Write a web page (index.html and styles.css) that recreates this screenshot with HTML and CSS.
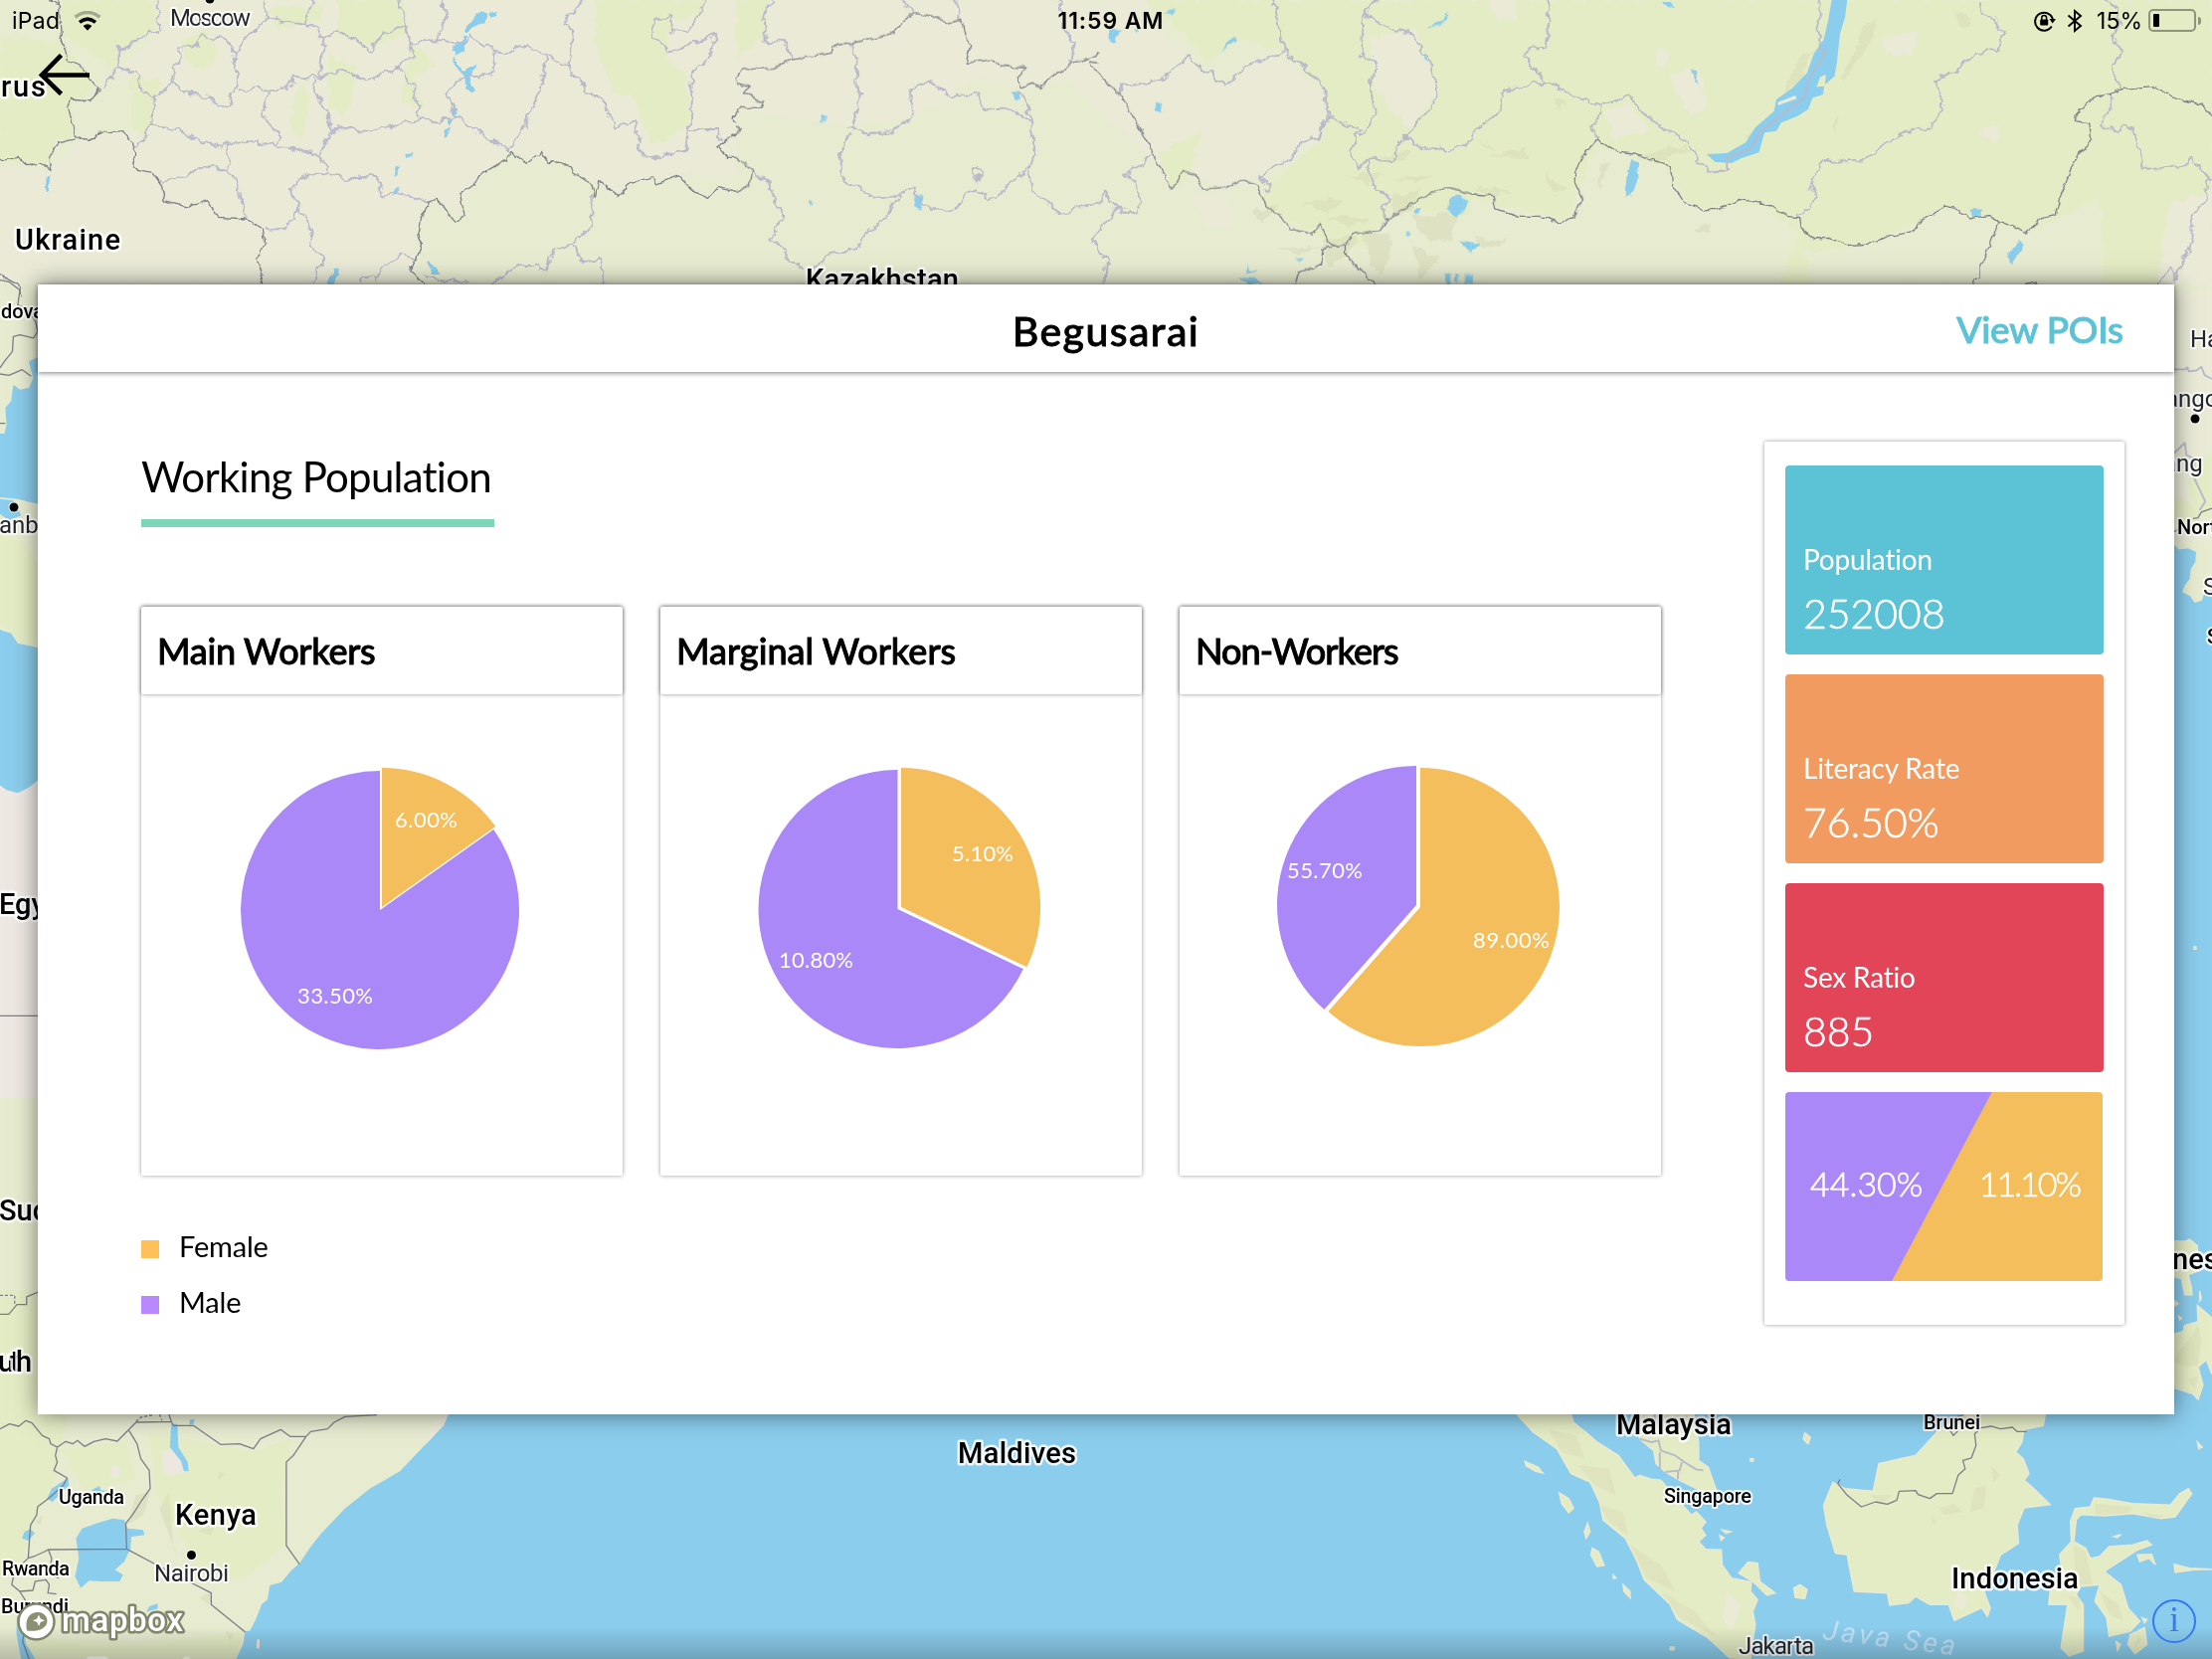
FILE: index.html
```html
<!DOCTYPE html>
<html lang="en">
<head>
<meta charset="utf-8">
<title>Begusarai</title>
<link rel="stylesheet" href="styles.css">
</head>
<body>
<div class="screen">
  <svg class="map" viewBox="0 0 2224 1668" aria-hidden="true">
    <defs>
      <filter id="rough" x="0" y="0" width="2224" height="1668" filterUnits="userSpaceOnUse">
        <feTurbulence type="fractalNoise" baseFrequency=".09" numOctaves="3" seed="4"/>
        <feDisplacementMap in="SourceGraphic" scale="11" xChannelSelector="R" yChannelSelector="G"/>
      </filter>
      <filter id="coast" x="0" y="0" width="2224" height="1668" filterUnits="userSpaceOnUse">
        <feTurbulence type="fractalNoise" baseFrequency=".12" numOctaves="2" seed="9"/>
        <feDisplacementMap in="SourceGraphic" scale="6" xChannelSelector="R" yChannelSelector="G"/>
      </filter>
      <linearGradient id="foot" x1="0" y1="0" x2="0" y2="1">
        <stop offset="0" stop-color="#000" stop-opacity="0"/>
        <stop offset="1" stop-color="#000" stop-opacity=".2"/>
      </linearGradient>
    </defs>
    <rect class="land" width="2224" height="1668"/>

    <!-- vegetation and steppe -->
    <g filter="url(#rough)">
      <g transform="scale(.4719 .3333)">
        <path class="beige" d="M330 0H1568V530L1440 530L1350 550L1310 590L1260 550L1210 490L1080 460L1010 550L980 640L920 600L890 700L880 860H0V500L110 515L170 420L270 395L330 300L240 220L340 90Z"/>
        <path class="green" d="M0 0H330V90L250 150L240 210L200 160L130 110V0ZM0 110L130 130L210 260L150 310L160 410L110 430L100 500L0 480ZM720 0H860L870 90L800 140L720 110ZM1270 0H1500L1510 110L1460 220L1470 380L1390 440L1350 300L1310 280L1270 150ZM560 20H690V60L600 90ZM880 130L930 200L880 230L900 330L850 310ZM640 240L660 300L640 420L620 380Z"/>
        <path class="beige" d="M1430 60L1500 40L1530 150L1480 230L1420 180Z"/>
        <path class="green" d="M390 120L440 90L470 160L430 220L390 170ZM700 160L760 200L740 350L700 320ZM280 230L340 240L310 420L280 380Z"/>
      </g>
      <g transform="translate(740 0) scale(.4719 .3333)">
        <path class="beige" d="M0 0H900L870 60L960 160L1040 260L1100 200L1160 170L1250 270L1260 400L1180 480L1110 540L1040 570L960 520L920 570L880 470L700 240L620 270L520 230L380 350L250 380L0 330ZM1380 80L1450 90L1490 280L1440 380L1390 330L1360 150ZM970 590L1050 580L1060 690L1000 680Z"/>
        <path class="green" d="M870 0H1568V650L1400 620L1340 740L1280 740L1120 620L1130 560L1250 420L1260 360L1250 260L1170 160L1080 110L1000 190L950 90ZM0 0H70L60 120L0 180ZM900 460L990 400L960 540L920 560Z"/>
        <path class="beige" d="M1350 110L1450 90L1490 280L1440 390L1390 330L1360 250ZM1110 190L1190 200L1230 280L1200 380L1110 390Z"/>
      </g>
      <g transform="translate(1480 0) scale(.4745 .3333)">
        <path class="green" d="M0 0H1568V860H640V700L480 640L400 500L270 440L200 660L0 600Z"/>
        <path class="mid" d="M0 600L200 670L240 520L260 440L410 500L450 620L620 620L690 700L650 860H0ZM700 760L850 730L1010 625L1180 700L1330 600L1340 860H720Z"/>
        <path class="beige" d="M390 150L420 160L410 200L390 190ZM420 230L480 200L500 330L460 350ZM280 340L330 310L380 390L300 420ZM870 120L950 90L930 170L880 160ZM1070 400L1120 370L1110 430ZM30 0H100L90 60L50 50Z"/>
        <path class="beige" d="M1480 610L1568 580V860H1450Z"/>
      </g>
    </g>

    <!-- hill shading -->
    <g class="relief" filter="url(#rough)">
      <g transform="translate(740 0) scale(.4719 .3333)">
        <path d="M1370 470L1440 460L1420 490ZM1310 530L1380 520L1340 560ZM1400 590L1460 570L1440 640L1400 650ZM1100 640L1160 620L1120 670ZM1200 610L1300 600L1260 640ZM1260 650L1350 660L1300 680ZM1440 650L1540 640L1520 730L1470 720ZM1150 745H1240L1200 765ZM1250 720L1330 715L1300 770L1260 800ZM1340 690L1400 720L1380 830L1350 800ZM1440 740L1500 780L1460 840ZM1400 540L1480 530L1450 555Z"/>
      </g>
      <g transform="translate(1480 0) scale(.4745 .3333)">
        <path d="M370 465L430 440L460 455L400 475ZM830 80L855 60L840 140L785 250L780 230L810 160ZM0 560L90 580L40 590ZM0 720L80 730L30 750ZM270 500L290 490L270 580ZM150 520L200 570L170 580ZM580 410L620 400L600 440ZM360 470L400 455L420 490ZM0 420L30 430L60 460ZM40 470L110 450L120 480ZM690 180L720 150L700 240L660 280ZM760 380L780 350L770 400ZM1020 30L1060 60L1040 90ZM470 690L510 680L500 710ZM170 290L200 310L180 330Z"/>
      </g>
    </g>

    <!-- lower left and side strips of land -->
    <rect class="mid" x="0" y="286" width="45" height="250"/>
    <g transform="translate(0 270) scale(.4464 .3333)">
      <path class="sea" d="M90 265L65 280L75 330L65 360L45 365L30 350L25 400L12 420L15 470L10 498L0 498V690L40 695L90 712ZM0 695L30 700L48 745L20 760L0 740ZM0 1090L25 1100L40 1130L90 1145V1350H0Z"/>
      <path class="green" d="M0 800L60 830L85 900V1130L40 1125L20 1090L0 1070Z"/>
      <path class="border" d="M0 35L20 40L45 65L40 110L60 120L80 160L85 190L75 210L45 200L30 205L28 250L10 280L0 300M0 318L20 322L50 305L70 325M0 467H12"/>
    </g>
    <g transform="translate(0 700) scale(.4464 .4592)">
      <rect class="desert" width="90" height="880"/>
      <rect class="mid" y="880" width="90" height="420"/>
      <path class="sea" d="M0 0H90V180L65 200L40 212L15 205L0 195Z"/>
      <path class="green" d="M0 1300H90V1568H0Z"/>
      <path class="border" d="M0 700H90M0 1353H20L38 1332H60V1315L90 1303"/>
      <path class="border dashed" d="M0 1312H33V1332"/>
    </g>
    <g transform="translate(0 1400) scale(.4719 .3333)">
      <path class="green" d="M0 0H150L120 250L70 400L50 500L0 560Z M320 120L540 180L620 140L600 300L610 460L520 560L430 540L330 300ZM130 170L270 150L290 260L180 300ZM60 740L300 760L520 720L500 804H60Z"/>
      <path class="pink" d="M345 180L380 165L400 240L350 250ZM240 220L260 230L250 260L235 250Z"/>
      <path class="relief" d="M290 310L320 300L305 370L270 400ZM420 420L460 390L450 430ZM340 350L360 300L370 470L380 500ZM425 620L450 600L445 640ZM480 720L500 730L490 750ZM75 390L92 370L85 400ZM465 240L480 245L465 265Z"/>
      <path class="sea" d="M956 60L945 100L852 238L788 290L735 350L684 426L662 465L638 516L622 535L600 572L575 582L570 625L558 638L545 685L532 720H522L518 760L503 804H4800V60Z"/>
      <path class="beach" d="M956 66L945 100L905 160L925 105L935 66ZM548 745H553V772H546Z"/>
      <path class="sea" d="M365 95H378L380 165L400 210L402 238H392L386 208L362 165ZM405 82L415 80L412 97H403ZM145 258L147 280L112 330L100 320L110 290ZM65 412L74 425L60 447L47 440L52 420ZM175 410L205 395L240 380L265 385L272 410L305 415L308 430L280 435L278 470L265 510L245 535L262 550L255 570L215 570L190 568L172 590L160 555L168 500L162 440ZM195 295L212 282L215 295L235 298L200 303ZM336 637V652L312 662L318 645ZM36 670L48 700L56 760L75 804H45L35 730Z"/>
      <path class="border" d="M0 110L20 95L40 102L55 85L68 92L90 130L105 140L108 155L122 165L140 148L155 155L165 145L180 163L200 148L225 140L250 147L290 90L365 88L370 100H412L470 157L510 155L540 170L555 140L598 112L618 133H652L662 118L698 110L712 90L735 73L803 68M652 133L625 190L610 210V462L638 518M365 88L360 66M122 165L118 190L122 210L115 235L143 258L135 280L105 318L80 345L78 370L65 400L60 500L72 495L95 480L103 474L270 472L268 395L282 370L300 330L320 290L318 235L300 200L292 155L275 115M270 472L340 525L450 605V640L522 722M60 500L45 520L28 560L25 580L42 600L70 597L75 570L98 565L105 580L102 605L120 608M42 600L60 640L55 700L48 750L62 804M103 474L110 500L105 545L125 560M60 710L85 690L98 660"/>
      <path class="border dashed" d="M290 88L300 75L325 68M340 66L345 85"/>
    </g>

    <!-- south-east asia -->
    <g transform="translate(1480 1400) scale(.4745 .3333)">
      <path class="green beachline" d="M95 66L130 120L180 170L210 245L250 270L270 330L278 385L325 440L350 510L365 565L420 640L435 685L500 740L545 800L590 804L600 700L595 660L605 625L590 600L592 572L550 560L530 520L528 475L495 473L480 450L495 430L485 410L495 390L475 360L465 370L440 330L400 265L380 262L355 250L345 258L310 190L265 150L245 125L215 90L210 66Z"/>
      <path class="green beachline" d="M345 66L355 140L385 175L390 215L410 240L440 265L490 300L518 295L500 225L480 205V150L470 66Z"/>
      <path class="green beachline" d="M1215 66L1210 100L1170 112L1165 150L1152 180L1168 200L1180 245L1170 265L1190 290L1225 338L1170 348L1155 400L1158 455L1120 490L1095 580L1085 600L1098 650L1092 675L1080 650L1022 688L1010 640L970 640L940 615L925 635L885 642L880 605L810 600L800 530L795 490L770 485L752 400L745 340L765 272L790 290L850 298L862 215L940 190L985 120L1040 66Z"/>
      <path class="green beachline" d="M1270 450L1268 390L1278 350L1310 345L1318 318L1345 322L1400 335L1480 340L1500 305L1518 290L1525 305L1490 375L1460 380L1400 365L1340 372L1290 368L1280 385L1275 450L1300 470L1310 500L1330 495L1350 465L1400 460L1430 447L1440 460L1410 475L1350 530L1340 540L1375 580L1390 650L1415 690L1395 720L1350 735L1345 680L1320 630L1330 580L1290 585L1280 610L1295 640V780L1265 795L1248 770L1262 640L1222 640L1225 600L1250 540L1245 490Z"/>
      <path class="green beachline" d="M565 545L585 512L605 515L610 570L642 605L625 612L595 570ZM682 590L695 580L710 595L705 622L685 618ZM255 470L268 480L280 522L265 525L252 490ZM185 303L205 320L215 350L205 363L190 335ZM112 208L140 225L150 243L135 238L115 222ZM705 122L717 135L712 155L702 140ZM245 395L250 420L242 440L238 420ZM320 580L335 600V620L322 600ZM298 548L305 560L300 562ZM530 415L548 420L538 425ZM525 432L534 438L528 446ZM1395 730L1425 710L1430 760L1405 788L1390 760ZM1365 752L1374 760L1368 778ZM1488 518L1520 530L1568 533L1530 535L1490 543ZM1360 435L1375 428L1368 438ZM1410 490L1440 488L1448 520L1435 500L1415 510ZM1535 0H1545L1540 22L1528 12ZM1537 150L1547 165L1540 170ZM1420 680L1430 685L1425 695ZM590 200H596V207H590ZM420 768H428V776H420Z"/>
      <path class="relief faint" d="M160 110L220 130L240 200L190 180ZM225 220L290 230L305 310L260 280ZM270 340L320 360L330 430L290 390ZM335 460L400 520L430 600L370 560ZM400 600L470 660L520 740L440 680ZM990 350L1020 335L1040 360L1000 370ZM1065 290L1090 280L1085 350L1055 360ZM1100 220L1120 250L1105 270ZM1320 335L1400 345L1390 365L1320 370ZM1420 360L1470 375L1440 380ZM1275 460L1300 480L1315 580L1280 580ZM1260 610L1290 620L1285 660ZM1330 600L1370 640L1380 690L1350 670ZM1410 735L1420 745L1405 770ZM840 310L890 310L870 335ZM975 370L985 390L975 395Z"/>
      <path class="beige" d="M1030 600L1050 620L1040 660L1020 640ZM540 600L570 640L550 720L530 680Z"/>
      <path class="border" d="M780 262L775 275L795 310L825 345L855 330L880 337L900 325L905 298L940 296L945 308L970 320L985 305L1018 305L1030 250L1045 230L1040 205L1058 198L1068 160L1065 125L1078 107L1100 102L1120 110L1145 105L1155 118H1175M1012 112L1020 130L1030 115M1025 75L1042 68"/>
      <path class="province" d="M355 140L380 150L395 145L400 175L430 190L450 210L475 232L490 235M398 180V230M410 240L440 235L445 210M437 238L436 262M387 66V100"/>
    </g>

    <!-- right-hand strip: Korea strait and Philippines -->
    <g transform="translate(1740 270) scale(.3333 .3827)">
      <rect class="beige" x="1330" y="60" width="122" height="660"/>
      <path class="green" d="M1400 520L1452 480V660L1400 640L1380 560ZM1338 600L1400 620L1420 660L1338 690Z"/>
      <path class="sea" d="M1330 720L1352 738L1380 735L1404 745L1402 770L1388 790L1385 815L1370 832L1362 850L1385 860L1400 878L1422 872L1430 850L1452 845V3020H1330Z"/>
      <path class="province" d="M1338 265H1370L1378 260L1382 270L1405 268L1420 258L1430 280L1452 290M1338 485L1370 458L1375 490L1400 500L1398 550L1420 590L1432 612L1415 635"/>
      <path class="border" d="M1395 657L1410 655L1420 640L1452 630M1338 692L1350 685"/>
    </g>
    <g transform="translate(1740 860) scale(.3333 .3635)">
      <path class="green beachline" d="M1330 1066L1370 1068L1385 1062L1408 1080L1410 1150L1380 1160L1390 1195L1392 1215L1370 1215L1360 1170L1330 1165ZM1330 1225L1350 1240L1335 1250ZM1415 1205L1420 1225L1415 1232ZM1330 1325L1365 1318L1370 1300L1410 1290L1408 1245L1440 1270L1452 1280V1435L1435 1395L1410 1415L1425 1465L1410 1505L1395 1490L1330 1470ZM1398 253H1404V259H1398ZM1352 1275L1360 1280L1355 1285Z"/>
      <path class="relief" d="M1345 1380L1390 1330L1410 1300L1420 1340L1410 1410L1370 1415L1338 1400ZM1380 1450L1410 1440L1400 1475Z"/>
    </g>

    <!-- lakes -->
    <g class="lake" filter="url(#coast)">
      <path transform="scale(.4719 .3333)" d="M1015 40L1038 42L1035 65L1010 80L992 98L990 88L1003 65ZM1043 42L1058 37L1058 48L1045 53ZM988 108H996L990 150L970 168L966 140L985 130ZM967 172L990 215L1016 195L1012 212L1000 230L1000 262L1014 270L1003 278L993 270L990 232L968 195ZM965 330H975L973 345H964ZM955 360H965L956 384ZM948 390L958 388L950 412H944ZM863 462L880 460L878 472L865 477ZM845 500H852L846 530H840ZM840 570L854 560L850 575L835 590ZM99 528H107L103 580H97ZM712 812L722 812L720 830L708 860H698L706 830ZM910 790L925 802L938 828H920Z"/>
      <path transform="translate(740 0) scale(.4719 .3333)" d="M920 30L936 25L928 42L914 40ZM792 92L825 88L812 108L808 130H798ZM848 88L860 90L853 98ZM1066 110L1067 122L1035 153L1048 125ZM587 280H602L606 298L595 303ZM895 307L905 315L908 340L893 335ZM183 348L195 350L180 375ZM155 604L164 606L158 622ZM383 592L398 590L392 615L398 632L377 625ZM1516 35L1518 55L1500 77L1475 82L1490 70L1505 65ZM1465 155L1478 190L1468 180ZM1520 600L1545 585L1560 610L1552 635L1535 652L1518 635ZM1450 628H1458V642H1448ZM1427 697L1438 700L1432 715ZM1540 725L1568 730V765L1550 740ZM1190 780L1210 778L1202 790ZM1087 797L1095 815L1110 820L1090 825ZM1070 835L1105 840L1125 857H1088ZM1512 825H1522V857H1512ZM1530 828H1538V850H1530ZM1555 825H1568V857H1550Z"/>
      <path transform="translate(1480 0) scale(.4745 .3333)" d="M402 5L420 5L430 22L415 26ZM468 210L474 213L480 258L472 235ZM338 480L352 490L350 545L338 592H325L332 510ZM1057 632L1080 635L1078 650L1060 657ZM1160 725L1170 742L1145 797L1132 775ZM0 730L18 740L0 755Z"/>
    </g>
    <g transform="translate(1480 0) scale(.4745 .3333)">
      <path class="sea" d="M762 0H795L790 55L780 100L773 190L768 230L748 255L750 225L738 232L730 262L746 260L744 285L722 295L712 330L690 350L655 370L645 395L620 400L608 460L570 478L550 492L515 488L497 465L540 462L580 430L600 385L640 335L645 300L680 265L710 220L725 160L745 120L755 60Z"/>
      <path class="beige" d="M648 308L685 288L688 298L648 318Z"/>
    </g>

    <!-- province lines -->
    <g class="province" filter="url(#rough)">
      <g transform="scale(.4719 .3333)">
        <path d="M335 0L340 90L255 145L248 205L220 265M248 205L290 220L300 270L330 290L370 250L415 290H447L458 320L490 315L495 285L510 260L500 200L495 140L470 115L430 110L420 135L385 145L383 180L370 200V250M330 290L320 380L380 390L400 410L470 440L530 425L590 440L600 410L560 350L570 280L550 260L510 275M570 280L610 265L630 230L680 235L690 110L650 75L570 55L560 0M570 55L510 135L500 160M650 75L665 0M680 110L730 98L790 150L810 110L860 75L850 0M860 75L875 130L880 165L845 205L780 245L720 210L680 235M845 205L880 260L895 360L830 380L780 395L710 390L665 240M895 360L940 365L970 350L950 280L975 240L1050 220L1055 150L1000 110L990 130L930 120L875 130M930 120L950 50L945 0M1055 150L1090 160L1110 135L1165 160L1150 270L1120 380L1085 455L1020 400L970 350M1165 160L1210 205L1250 275L1280 295L1310 380L1350 370L1370 470L1400 475L1458 455L1470 390L1475 220L1510 180L1525 105L1500 120L1430 155L1390 110L1395 60L1425 55L1435 95L1465 90L1490 40L1505 0M1210 205L1220 100L1200 75L1245 0M1470 390L1530 390L1535 430M320 380L290 450M590 440L680 470L710 390M680 470L700 520L735 540L800 530L820 590L860 580L915 610M700 520L655 530L620 570L635 630L660 680L665 740L690 780L665 850M480 440L485 510L510 560L525 660M485 510L440 500L400 530L345 550M635 630L610 685L570 690M1265 590L1260 680L1220 735L1180 755L1165 815L1110 795L1045 855M1220 735L1240 790L1278 785L1285 857M905 835L1000 855M800 855L810 810L855 770L885 785M770 857V840L800 830"/>
      </g>
      <g transform="translate(740 0) scale(.4719 .3333)">
        <path d="M80 0L60 50L58 125L110 130L118 180M350 0L380 40M465 0L480 60M690 0L700 90L720 130L715 190M250 130L258 200L262 310L248 390L310 405L345 390L375 350L370 270L410 245L460 290L515 280L525 330L580 325L630 365L632 450L635 490L610 520L590 550L540 605L510 570L460 640L400 620L378 565L350 590L300 600L270 570L230 550L220 460L245 400M605 280L632 365M620 515L640 580L690 645L770 610L785 580L810 630L850 645L865 610L850 560L830 530L888 470M810 630L785 680L760 720L790 790L785 857M350 590L320 650L250 755L190 770L165 820M40 510L75 570L100 655L75 720L140 810M820 290V260L905 240L965 170L1040 260L1085 200L1170 155L1150 50L1145 0M1170 155L1220 210L1255 270L1260 355L1330 385L1310 450L1325 505L1345 485L1400 480L1425 410L1480 330L1495 280L1470 170L1440 100L1380 80L1340 40L1365 0M1340 40L1330 165L1365 180L1350 250L1365 345L1330 410M1425 410L1450 440L1530 455L1568 420M1260 355L1245 410L1205 430L1180 480L1115 530L1140 570L1125 580M1345 485L1360 560L1395 600L1375 625L1385 660M520 510L500 515L510 545L525 530L515 510"/>
      </g>
      <g transform="translate(1480 0) scale(.4745 .3333)">
        <path d="M160 0L165 50L155 140L125 145L108 170L155 245L60 280L60 330L20 380L0 415M155 245L235 300L275 320L330 285L370 350L435 410L470 460L478 490L500 500V525L540 510M275 320L262 370L255 400L265 420M735 0L735 145M1080 0L1085 45L1110 60L1128 105L1115 150L1070 160L1030 210L980 245L1000 320L975 380L900 405L830 485L735 490L720 560L735 595L690 650M1340 0L1365 20L1375 70L1355 110L1378 155L1360 200L1375 270M1350 285L1360 310L1335 370L1365 400L1385 380L1408 405L1420 510L1510 505L1525 475L1565 540L1550 610L1525 650L1525 740L1500 800L1490 850M1490 850L1480 805L1450 857"/>
      </g>
    </g>
    <g transform="translate(1480 0) scale(.4745 .3333)">
      <path class="province" d="M735 145L750 155L715 235L703 295L612 395L588 450L540 475V510"/>
    </g>

    <!-- country borders -->
    <g class="border" filter="url(#coast)">
      <g transform="scale(.4719 .3333)">
        <path d="M125 0L130 110L145 180L170 195L190 235L212 270L190 305L150 300L143 325L160 410L190 425L210 400L262 395L275 420L290 460L285 510L325 520L345 560L350 605L400 625L440 605L465 655L525 660L560 690L565 730L548 780L560 830L555 857M160 420L125 430L105 470L110 515L90 490L60 500L40 475L0 485M0 830L40 860L45 900M905 857L875 815L900 740L890 710L895 660L915 610L930 600L970 670L990 650L980 585L1010 555L1020 530L1080 480L1085 460L1125 490L1155 460L1170 490L1210 495L1220 520L1260 555L1268 595L1275 545L1318 590L1345 550L1390 535L1400 555L1445 530L1480 580L1510 598L1530 565L1568 580M1568 345L1560 355L1568 370M1568 405L1530 440L1550 475H1568M105 0L125 15"/>
      </g>
      <g transform="translate(740 0) scale(.4719 .3333)">
        <path d="M0 245L10 210L80 205L120 180L205 160L210 140L250 130L335 100L355 65L380 40L425 50L450 70L480 60L490 120L500 135L490 190L545 180L570 200L620 205L600 235L605 265L630 250L650 265L665 235L700 210L715 190L765 170L770 155M770 190L752 185L755 200L820 287L865 395L890 467L926 570L945 545L950 515L975 525L995 570L1045 565L1075 542L1110 560L1130 625L1160 650L1180 690L1225 705L1245 675L1260 725L1280 745L1300 740L1315 705L1370 695L1390 660L1440 615L1490 575L1520 565L1568 585M1275 740L1250 750L1245 800L1200 820L1190 857M1300 740L1300 770L1360 857M0 475L35 515L30 560L0 580M0 250L30 260L15 280L60 310L55 325L10 325L0 345M0 380L10 390L0 405"/>
      </g>
      <g transform="translate(1480 0) scale(.4745 .3333)">
        <path d="M0 585L45 590L50 630L100 655L155 655L185 675L215 655L235 600L215 540L235 470L265 420L310 460L345 465L420 500L425 560L450 610L490 632L515 632L570 602L635 618L665 652L697 656L700 690L725 720L755 718L800 740L840 735L880 715L935 698L950 668L1005 622L1030 630L1055 660L1095 650L1118 668L1175 700L1210 658L1235 650L1243 610L1280 470L1305 440L1312 415L1308 372L1278 365L1280 345L1318 290L1340 288L1380 268L1440 260L1500 300L1545 315L1568 350M1118 668L1088 770L1075 805V835L1062 845V857M1170 857Q1185 850 1200 857"/>
      </g>
    </g>

    <!-- place names -->
    <g class="city">
      <text x="171" y="26" textLength="81">Moscow</text>
      <text x="-1" y="536">anbul</text>
      <text x="155" y="1590" textLength="75">Nairobi</text>
      <text x="1748" y="1663" textLength="76">Jakarta</text>
      <text x="2202" y="349">Ha</text>
      <text x="2177" y="409">ango</text>
      <text x="2175" y="474">ang</text>
      <text x="2215" y="598">S</text>
    </g>
    <g class="country">
      <text x="15" y="251" textLength="106">Ukraine</text>
      <text x="1" y="97" textLength="45">rus</text>
      <text x="810" y="291" textLength="154">Kazakhstan</text>
      <text x="-1" y="919">Egypt</text>
      <text x="-1" y="1227">Sudan</text>
      <text x="-2" y="1379" textLength="34">uth</text>
      <text x="176" y="1533" textLength="82">Kenya</text>
      <text x="89" y="1689" textLength="118">Tanzania</text>
      <text x="963" y="1471" textLength="119">Maldives</text>
      <text x="1625" y="1442" textLength="116">Malaysia</text>
      <text x="1962" y="1597" textLength="128">Indonesia</text>
      <text x="2184" y="1276">nes</text>
    </g>
    <g class="country small">
      <text x="1" y="320">dova</text>
      <text x="59" y="1512" textLength="66">Uganda</text>
      <text x="2" y="1584" textLength="68">Rwanda</text>
      <text x="1" y="1622" textLength="68">Burundi</text>
      <text x="1673" y="1511" textLength="88">Singapore</text>
      <text x="1934" y="1437" textLength="57">Brunei</text>
      <text x="2189" y="537">Nort</text>
      <text x="2219" y="647">S</text>
    </g>
    <g class="dot">
      <circle cx="211" cy="-1" r="4.5"/><circle cx="192.500" cy="1563.500" r="4.500"/>
      <circle cx="14" cy="510" r="4.500"/><circle cx="2207" cy="421" r="4.500"/>
    </g>
    <text class="ocean" transform="translate(1832 1648) rotate(7)" textLength="134">Java Sea</text>
    <rect y="1636" width="2224" height="32" fill="url(#foot)"/>
  </svg>

  <header class="status">
    <div class="status-left">
      <span class="carrier">iPad</span>
      <svg width="28" height="20" viewBox="0 0 28 20" fill="none" stroke="#000" stroke-width="3.600">
        <path d="M1.500 6.200Q14 -3.200 26.500 6.200" stroke-opacity=".28"/>
        <path d="M6 11.300Q14 5 22 11.300"/>
        <path d="M9.600 15Q14 11.400 18.400 15L14 19.800Z" fill="#000" stroke="none"/>
      </svg>
    </div>
    <span class="clock">11:59 AM</span>
    <div class="status-right">
      <svg width="24" height="22" viewBox="0 0 24 22">
        <path d="M18.800 16.500A9 9 0 1 1 20 10" fill="none" stroke="#000" stroke-width="2"/>
        <path d="M16.500 9H23L19.700 13.500Z"/>
        <rect x="7.200" y="9.500" width="8" height="6" rx="1"/>
        <path d="M8.800 10V8A2.400 2.400 0 0 1 13.600 8V10" fill="none" stroke="#000" stroke-width="1.500"/>
      </svg>
      <svg class="bluetooth" width="16" height="24" viewBox="0 0 16 24" fill="none" stroke="#000" stroke-width="1.900">
        <path d="M1.500 6.500L14 17L8 22V2L14 7L1.500 17.500"/>
      </svg>
      <span class="percent">15%</span>
      <div class="battery"><div class="charge"></div></div>
      <div class="nub"></div>
    </div>
  </header>

  <nav class="back">
    <svg width="54" height="42" viewBox="0 0 54 42" fill="none" stroke="#000" stroke-width="4.600">
      <path d="M24.500 1.500L5 21.500L24.500 40.500M5 21.500H53"/>
    </svg>
  </nav>

  <main class="panel">
    <div class="panel-head">
      <h1>Begusarai</h1>
      <a class="pois">View POIs</a>
    </div>
    <div class="panel-body">
      <section class="workers">
        <h2>Working Population</h2>
        <div class="cards">
          <article class="card">
            <h3>Main Workers</h3>
            <svg class="pie" viewBox="142 698 484 484">
              <path class="male" d="M382 915V775A140 140 0 1 0 496.300 834.100Z"/>
              <path class="female" d="M384 912V772A140 140 0 0 1 498.300 831.100Z"/>
              <text x="397" y="832" textLength="63">6.00%</text>
              <text x="299" y="1009" textLength="76">33.50%</text>
            </svg>
          </article>
          <article class="card">
            <h3 class="wide">Marginal Workers</h3>
            <svg class="pie" viewBox="664 698 484 484">
              <path class="male" d="M902.500 914V774A140 140 0 1 0 1028.900 974.300Z"/>
              <path class="female" d="M906 912V772A140 140 0 0 1 1032.400 972.300Z"/>
              <text x="957" y="866" textLength="62">5.10%</text>
              <text x="783" y="973" textLength="75">10.80%</text>
            </svg>
          </article>
          <article class="card">
            <h3 class="tight">Non-Workers</h3>
            <svg class="pie" viewBox="1186 698 484 484">
              <path class="male" d="M1424 910V770A140 140 0 0 0 1331.400 1015Z"/>
              <path class="female" d="M1428 912V772A140 140 0 1 1 1335.400 1017Z"/>
              <text x="1294" y="883" textLength="76">55.70%</text>
              <text x="1481" y="953" textLength="77">89.00%</text>
            </svg>
          </article>
        </div>
        <ul class="legend">
          <li><i class="swatch amber"></i><span>Female</span></li>
          <li><i class="swatch violet"></i><span>Male</span></li>
        </ul>
      </section>
      <aside class="stats">
        <div class="tile teal"><span class="label">Population</span><span class="value">252008</span></div>
        <div class="tile orange"><span class="label">Literacy Rate</span><span class="value">76.50%</span></div>
        <div class="tile red"><span class="label">Sex Ratio</span><span class="value">885</span></div>
        <div class="tile split"><span>44.30%</span><span class="narrow">11.10%</span></div>
      </aside>
    </div>
  </main>

  <svg class="logo" width="180" height="48" viewBox="0 0 180 48">
    <circle cx="20.500" cy="22.500" r="18" fill="#fff" stroke="#80856b" stroke-width="2.500"/>
    <path d="M11 31.500C9 20 13 13 22.500 13A9 9 0 0 1 31.500 21C31.500 30 21 33 11 31.500Z" fill="#8b9074"/>
    <path d="M23 15.500L24.800 19.600L29 21.300L24.800 23L23 27L21.200 23L17 21.300L21.200 19.600Z" fill="#fff"/>
    <text x="46" y="32" textLength="122">mapbox</text>
  </svg>
  <div class="info">i</div>
</div>
</body>
</html>
```
FILE: styles.css
```css
* { box-sizing: border-box; }

body { margin: 0; }

.screen {
  position: relative;
  width: 2224px;
  height: 1668px;
  overflow: hidden;
  color: #000;
  font-family: Lato, "Liberation Sans", sans-serif;
  font-variant-ligatures: none;
}

/* map backdrop */
.map { position: absolute; inset: 0; width: 2224px; height: 1668px; }
.land, .mid { fill: #e7ebd0; }
.green { fill: #e4ecc5; }
.beige { fill: #eaead7; }
.pink { fill: #ece8e0; }
.desert { fill: #ede8e2; }
.beach { fill: #ece8dc; }
.sea, .lake { fill: #8bcdec; }
.relief { fill: #d6dab4; fill-opacity: .5; }
.faint { fill-opacity: .4; }
.beachline { stroke: #ebe9d2; stroke-width: 1.5; vector-effect: non-scaling-stroke; }
.province, .border { fill: none; stroke-linejoin: round; }
.province { stroke: #b9b9ca; stroke-width: 1.9; }
.border { stroke: #7d7f88; stroke-width: 1.3; }
.province path, .border path, path.province, path.border { vector-effect: non-scaling-stroke; }
.dashed { stroke-dasharray: 3 2; }

.city, .country { paint-order: stroke; stroke: #fff; stroke-opacity: .85; stroke-linejoin: round; font-family: Roboto, sans-serif; }
.city { fill: #23262a; font-size: 24px; stroke-width: 4px; }
.country { fill: #000; font-size: 29px; font-weight: 500; stroke-width: 5px; }
.country.small { font-size: 20px; stroke-width: 4px; }
.dot circle { stroke: #fff; stroke-opacity: .8; stroke-width: 2; paint-order: stroke; }
.ocean { fill: #c2e2f7; font: italic 28px Roboto, sans-serif; }

/* status bar */
.status {
  position: relative;
  display: grid;
  grid-template-columns: 1fr auto 1fr;
  align-items: center;
  height: 41px;
  padding: 0 11px 0 12px;
  font-family: Inter, sans-serif;
  font-size: 23px;
}
.status-left, .status-right { display: flex; align-items: center; }
.status-left { gap: 14px; }
.carrier { letter-spacing: .3px; }
.status-right { justify-content: flex-end; }
.clock { margin-right: -9px; font-size: 23px; font-weight: 600; letter-spacing: .9px; }
.bluetooth { margin: 0 14px 0 10px; }
.percent { margin-right: 6px; }
.battery { width: 48px; height: 23px; padding: 3px; border: 2px solid #8e947c; border-radius: 5px; }
.charge { width: 6px; height: 100%; border-radius: 1px; background: #000; }
.nub { width: 3px; height: 8px; margin-left: 2px; border-radius: 0 4px 4px 0; background: #8e947c; }

.back { position: relative; height: 245px; padding: 13px 0 0 37px; }
.back svg { display: block; }

/* detail panel */
.panel {
  position: relative;
  width: 2148px;
  height: 1136px;
  margin-left: 38px;
  background: #fff;
  box-shadow: 0 0 22px rgba(0, 0, 0, .5);
}
.panel-head {
  position: relative;
  display: grid;
  grid-template-columns: 1fr auto 1fr;
  align-items: center;
  height: 88px;
  padding: 0 51px;
  box-shadow: 0 1px 5px rgba(0, 0, 0, .5);
}
.panel-head h1 {
  grid-column: 2;
  margin: 4px 0 0;
  font-size: 41px;
  font-weight: 500;
  letter-spacing: 1.4px;
  -webkit-text-stroke: .8px #000;
}
.pois {
  justify-self: end;
  color: #5cc2d6;
  font-size: 37px;
  font-weight: 500;
  letter-spacing: -.2px;
  -webkit-text-stroke: .9px #5cc2d6;
}

.panel-body { display: flex; justify-content: space-between; padding: 70px 50px 0 104px; }
.workers { width: 1528px; }
h2 {
  width: 355px;
  margin: 0;
  padding-bottom: 8px;
  border-bottom: 8px solid #7cd6b8;
  font-size: 42px;
  font-weight: 400;
  letter-spacing: -.75px;
  line-height: 70px;
  white-space: nowrap;
}

.cards { display: grid; grid-template-columns: repeat(3, 484px); gap: 38px; margin-top: 80px; }
.card { height: 572px; border-radius: 2px; box-shadow: 0 0 4px rgba(0, 0, 0, .4); }
.card h3 {
  height: 88px;
  margin: 0;
  padding-left: 16px;
  border-radius: 2px;
  box-shadow: 0 0 4px rgba(0, 0, 0, .45);
  font-size: 36px;
  font-weight: 500;
  letter-spacing: -.3px;
  line-height: 88px;
  -webkit-text-stroke: .9px #000;
}
.card h3.wide { letter-spacing: 0; }
.card h3.tight { letter-spacing: -1px; }
.pie { display: block; width: 484px; height: 484px; }
.pie text { fill: #fff; font-size: 22px; }
.male { fill: #aa88f8; }
.female { fill: #f4be5d; }

.legend { margin: 46px 0 0; padding: 0; list-style: none; }
.legend li { display: flex; align-items: center; gap: 20px; height: 56px; font-size: 29px; }
.legend span { margin-top: -7px; letter-spacing: -.2px; }
.swatch { width: 18px; height: 18px; }
.amber { background: #ffc05a; }
.violet { background: #b888fc; }

.stats {
  display: flex;
  flex-direction: column;
  gap: 20px;
  width: 362px;
  height: 888px;
  padding: 24px 21px;
  border-radius: 2px;
  box-shadow: 0 0 4px rgba(0, 0, 0, .4);
}
.tile {
  display: flex;
  flex-direction: column;
  justify-content: flex-end;
  gap: 10px;
  height: 190px;
  padding: 0 0 16px 18px;
  border-radius: 4px;
  color: #fff;
}
.label { font-size: 28px; letter-spacing: -.2px; line-height: 40px; }
.value { font-size: 41px; font-weight: 300; line-height: 50px; -webkit-text-stroke: .6px #fff; }
.teal { background: #5cc2d6; }
.orange { background: #f19b61; }
.red { background: #e24557; }
.split {
  flex-direction: row;
  align-items: center;
  justify-content: space-between;
  width: 319px;
  padding: 0 23px 7px 25px;
  background: linear-gradient(117.900deg, #aa88f8 49.350%, #f4be5d 49.650%);
  font-size: 34px;
  font-weight: 300;
  -webkit-text-stroke: .6px #fff;
}
.narrow { letter-spacing: -2px; }

/* map attribution */
.logo { position: absolute; left: 16px; top: 1608px; }
.logo text {
  fill: #fff;
  stroke: #80856b;
  stroke-width: 5px;
  paint-order: stroke;
  stroke-linejoin: round;
  font: 500 33px Roboto, sans-serif;
}
.info {
  position: absolute;
  left: 2164px;
  top: 1608px;
  width: 44px;
  height: 44px;
  border: 2px solid #3478f6;
  border-radius: 50%;
  color: #3478f6;
  font: 35px/38px "Liberation Serif", serif;
  text-align: center;
}
```
